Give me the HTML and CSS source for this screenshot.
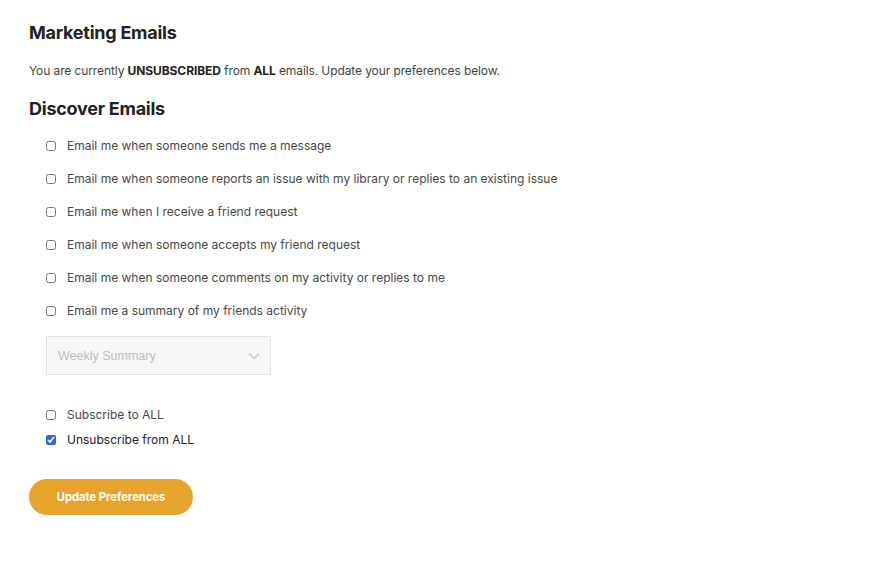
FILE: index.html
```html
<!DOCTYPE html>
<html>
<head>
<meta charset="utf-8">
<link rel="stylesheet" href="styles.css">
</head>
<body>
<main class="page">
  <h1 class="title">Marketing Emails</h1>
  <p class="status">You are currently <b>UNSUBSCRIBED</b> from <b>ALL</b> emails. Update your preferences below.</p>
  <h2 class="title title-2">Discover Emails</h2>
  <div class="options">
    <label class="opt"><input type="checkbox"><span>Email me when someone sends me a message</span></label>
    <label class="opt"><input type="checkbox"><span>Email me when someone reports an issue with my library or replies to an existing issue</span></label>
    <label class="opt"><input type="checkbox"><span>Email me when I receive a friend request</span></label>
    <label class="opt"><input type="checkbox"><span>Email me when someone accepts my friend request</span></label>
    <label class="opt"><input type="checkbox"><span>Email me when someone comments on my activity or replies to me</span></label>
    <label class="opt"><input type="checkbox"><span>Email me a summary of my friends activity</span></label>
  </div>
  <div class="select">
    <span>Weekly Summary</span>
    <svg width="12" height="8" viewBox="0 0 12 8"><path d="M1 1.5l5 5 5-5" fill="none" stroke="#c4c4c4" stroke-width="1.3"/></svg>
  </div>
  <div class="all">
    <label class="opt2"><input type="checkbox"><span>Subscribe to ALL</span></label>
    <label class="opt2 on"><input type="checkbox" checked><span>Unsubscribe from ALL</span></label>
  </div>
  <button class="btn">Update Preferences</button>
</main>
</body>
</html>
```
FILE: styles.css
```css
html, body { margin: 0; padding: 0; background: #fff; }
body { font-family: Inter, "Open Sans", sans-serif; color: #333; }
.page { padding: 20px 29px; display: flex; flex-direction: column; align-items: flex-start; }
.title { margin: 0; font-size: 18px; font-weight: 700; color: #222; line-height: 26px; letter-spacing: -0.25px; }
.status { margin: 17px 0 0; font-size: 12px; line-height: 16px; color: #444; letter-spacing: -0.1px; }
.status b { font-weight: 700; color: #222; }
.title-2 { margin-top: 17px; }
.options { display: flex; flex-direction: column; gap: 17px; margin-top: 16px; padding-left: 17px; }
.opt, .opt2 { display: flex; align-items: center; font-size: 12px; line-height: 16px; color: #484848; }
.opt input, .opt2 input { width: 10px; height: 10px; margin: 0 11px 0 0; accent-color: #2c6ae5; }
.select { margin: 17px 0 0 17px; width: 225px; height: 39px; box-sizing: border-box; background: #f7f7f7; border: 1px solid #e4e4e4; display: flex; align-items: center; justify-content: space-between; padding: 0 10px 0 11px; font-family: "Liberation Sans", Arial, sans-serif; font-size: 12.5px; color: #bdbdbd; }
.all { display: flex; flex-direction: column; gap: 9px; margin-top: 32px; padding-left: 17px; }
.opt2.on span { color: #222; }
.btn { margin-top: 31px; width: 164px; height: 36px; border: none; border-radius: 18px; background: #e6a42c; color: #fff; font-family: Inter, sans-serif; font-weight: 700; font-size: 11.2px; cursor: pointer; }
```
